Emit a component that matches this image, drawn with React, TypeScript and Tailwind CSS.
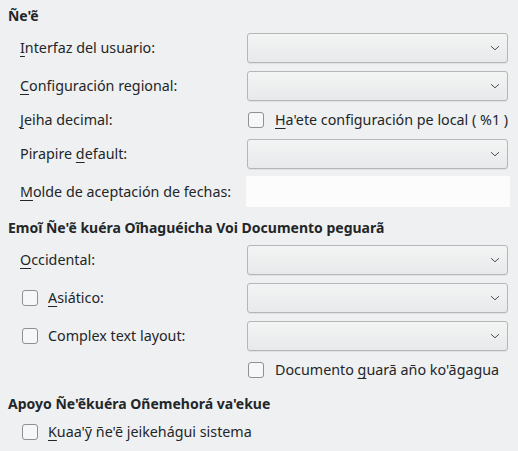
import React from "react";

const U: React.FC<{ children: React.ReactNode }> = ({ children }) => (
  <span className="underline decoration-1 underline-offset-[3px]">{children}</span>
);

const Combo: React.FC = () => (
  <div className="h-[30px] w-[261px] rounded-[3px] border border-[#b5b6b7] bg-gradient-to-b from-[#f3f4f4] to-[#e8e9ea] shadow-[0_1px_0_rgba(0,0,0,0.06)] flex items-center justify-end pr-[5px]">
    <svg width="12" height="8" viewBox="0 0 12 8" className="mr-[1px]">
      <path d="M2 2.2 L6 5.8 L10 2.2" fill="none" stroke="#4d4f51" strokeWidth="1" />
    </svg>
  </div>
);

const Box: React.FC = () => (
  <div className="h-[16px] w-[16px] shrink-0 rounded-[3px] border border-[#8e9091] bg-[#f7f7f7]" />
);

const Row: React.FC<{ label: React.ReactNode; mt: string; check?: boolean; children: React.ReactNode }> = ({
  label,
  mt,
  check,
  children,
}) => (
  <div className={`flex items-center ${mt}`}>
    <div className="w-[227px] flex items-center">
      {check ? (
        <>
          <span className="ml-[2px]"><Box /></span>
          <span className="ml-[10px]">{label}</span>
        </>
      ) : (
        label
      )}
    </div>
    {children}
  </div>
);

const CheckLine: React.FC<{ children: React.ReactNode }> = ({ children }) => (
  <div className="h-[22px] flex items-center pl-[1px]">
    <Box />
    <span className="ml-[11px]">{children}</span>
  </div>
);

export default function App() {
  return (
    <div
      className="w-[518px] h-[451px] bg-[#eff0f1] text-[#232629] text-[14.3px] px-[8px] pt-[6px]"
      style={{ fontFamily: '"Noto Sans", "DejaVu Sans", sans-serif' }}
    >
      <div className="h-[20px] leading-[20px] font-bold text-[14px]">Ñe'ẽ</div>
      <div className="pl-[12px]">
        <Row mt="mt-[7px] h-[30px]" label={<span><U>I</U>nterfaz del usuario:</span>}>
          <Combo />
        </Row>
        <Row mt="mt-[8px] h-[30px]" label={<span><U>C</U>onfiguración regional:</span>}>
          <Combo />
        </Row>
        <Row mt="mt-[8px] h-[22px]" label={<span><U>J</U>eiha decimal:</span>}>
          <CheckLine>
            <U>H</U>a'ete configuración pe local ( %1 )
          </CheckLine>
        </Row>
        <Row mt="mt-[8px] h-[30px]" label={<span>Pirapire <U>d</U>efault:</span>}>
          <Combo />
        </Row>
        <Row mt="mt-[7px] h-[31px]" label={<span><U>M</U>olde de aceptación de fechas:</span>}>
          <div className="h-[31px] w-[264px] -ml-[1px] bg-[#fcfcfc]" />
        </Row>
      </div>

      <div className="mt-[11px] h-[20px] leading-[20px] font-bold text-[14px]">
        Emoĩ Ñe'ẽ kuéra Oĩhaguéicha Voi Documento peguarã
      </div>
      <div className="pl-[12px]">
        <Row mt="mt-[7px] h-[30px]" label={<span><U>O</U>ccidental:</span>}>
          <Combo />
        </Row>
        <Row mt="mt-[8px] h-[30px]" check label={<span><U>A</U>siático:</span>}>
          <Combo />
        </Row>
        <Row mt="mt-[8px] h-[30px]" check label={<span>Complex text layout:</span>}>
          <Combo />
        </Row>
        <Row mt="mt-[8px] h-[22px]" label={<span />}>
          <CheckLine>
            Documento <U>g</U>uarã año ko'ãgagua
          </CheckLine>
        </Row>
      </div>

      <div className="mt-[13px] h-[20px] leading-[20px] font-bold text-[14px]">Apoyo Ñe'ẽkuéra Oñemehorá va'ekue</div>
      <div className="pl-[14px] mt-[7px] h-[22px] flex items-center">
        <Box />
        <span className="ml-[10px]">
          <U>K</U>uaa'ỹ ñe'ẽ jeikehágui sistema
        </span>
      </div>
    </div>
  );
}
